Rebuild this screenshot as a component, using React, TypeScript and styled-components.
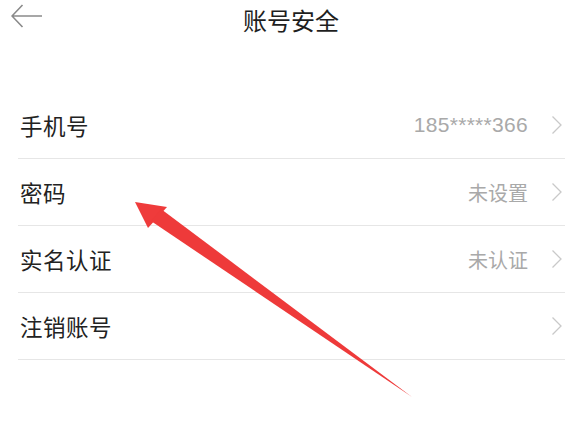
import React from 'react';
import styled, { createGlobalStyle } from 'styled-components';

const GlobalStyle = createGlobalStyle`
  html, body {
    margin: 0;
    padding: 0;
    background: #ffffff;
  }
  body {
    font-family: "Noto Sans CJK SC", "Liberation Sans", sans-serif;
    -webkit-font-smoothing: antialiased;
  }
`;

const Page = styled.div`
  position: relative;
  width: 582px;
  height: 424px;
  overflow: hidden;
  background: #ffffff;
`;

const Header = styled.div`
  display: grid;
  grid-template-columns: 60px 1fr 60px;
  align-items: center;
  height: 40px;
`;

const BackButton = styled.button`
  display: flex;
  align-items: center;
  justify-content: flex-start;
  padding: 0 0 0 11px;
  height: 32px;
  background: transparent;
  border: none;
  cursor: pointer;
  align-self: start;
`;

const Title = styled.h1`
  margin: 0;
  text-align: center;
  font-size: 24px;
  font-weight: 400;
  color: #1e1e1e;
  line-height: 40px;
`;

const List = styled.div`
  margin: 52px 17px 0 18px;
  display: flex;
  flex-direction: column;
`;

const Row = styled.div`
  display: flex;
  align-items: center;
  justify-content: space-between;
  height: 66px;
  padding: 0 2px 0 2px;
  border-bottom: 1px solid #e6e6e6;
`;

const Label = styled.span`
  font-size: 22.5px;
  color: #222222;
  letter-spacing: 0.5px;
`;

const Right = styled.div`
  display: flex;
  align-items: center;
  gap: 23px;
`;

const Value = styled.span<{ $latin?: boolean }>`
  font-size: ${p => (p.$latin ? '21px' : '20px')};
  color: #a9a9a9;
  font-family: ${p =>
    p.$latin ? '"Liberation Sans", "Noto Sans CJK SC", sans-serif' : '"Noto Sans CJK SC", sans-serif'};
  letter-spacing: ${p => (p.$latin ? '0.3px' : '0')};
`;

const Chevron = styled.svg`
  width: 12px;
  height: 20px;
  display: block;
`;

const Pointer = styled.svg`
  position: absolute;
  left: 0;
  top: 0;
  width: 582px;
  height: 424px;
  pointer-events: none;
`;

const rows = [
  { label: '手机号', value: '185*****366', latin: true },
  { label: '密码', value: '未设置' },
  { label: '实名认证', value: '未认证' },
  { label: '注销账号', value: '' },
];

const App: React.FC = () => {
  return (
    <Page>
      <GlobalStyle />
      <Header>
        <BackButton aria-label="返回">
          <svg width="32" height="24" viewBox="0 0 32 24">
            <path d="M1 12 H31 M11.5 1 L1 12 L11.5 23" fill="none" stroke="#8a8a8a" strokeWidth="1.6" />
          </svg>
        </BackButton>
        <Title>账号安全</Title>
        <div />
      </Header>

      <List>
        {rows.map(row => (
          <Row key={row.label}>
            <Label>{row.label}</Label>
            <Right>
              {row.value && <Value $latin={row.latin}>{row.value}</Value>}
              <Chevron viewBox="0 0 12 20">
                <path d="M1.5 1.5 L10 10 L1.5 18.5" fill="none" stroke="#c9c9c9" strokeWidth="1.3" />
              </Chevron>
            </Right>
          </Row>
        ))}
      </List>

      <Pointer viewBox="0 0 582 424">
        <polygon points="135,202 167,207 148,228" fill="#ef3b3b" />
        <polygon points="161,209 412,397 151,221" fill="#ee3a3a" />
      </Pointer>
    </Page>
  );
};

export default App;
